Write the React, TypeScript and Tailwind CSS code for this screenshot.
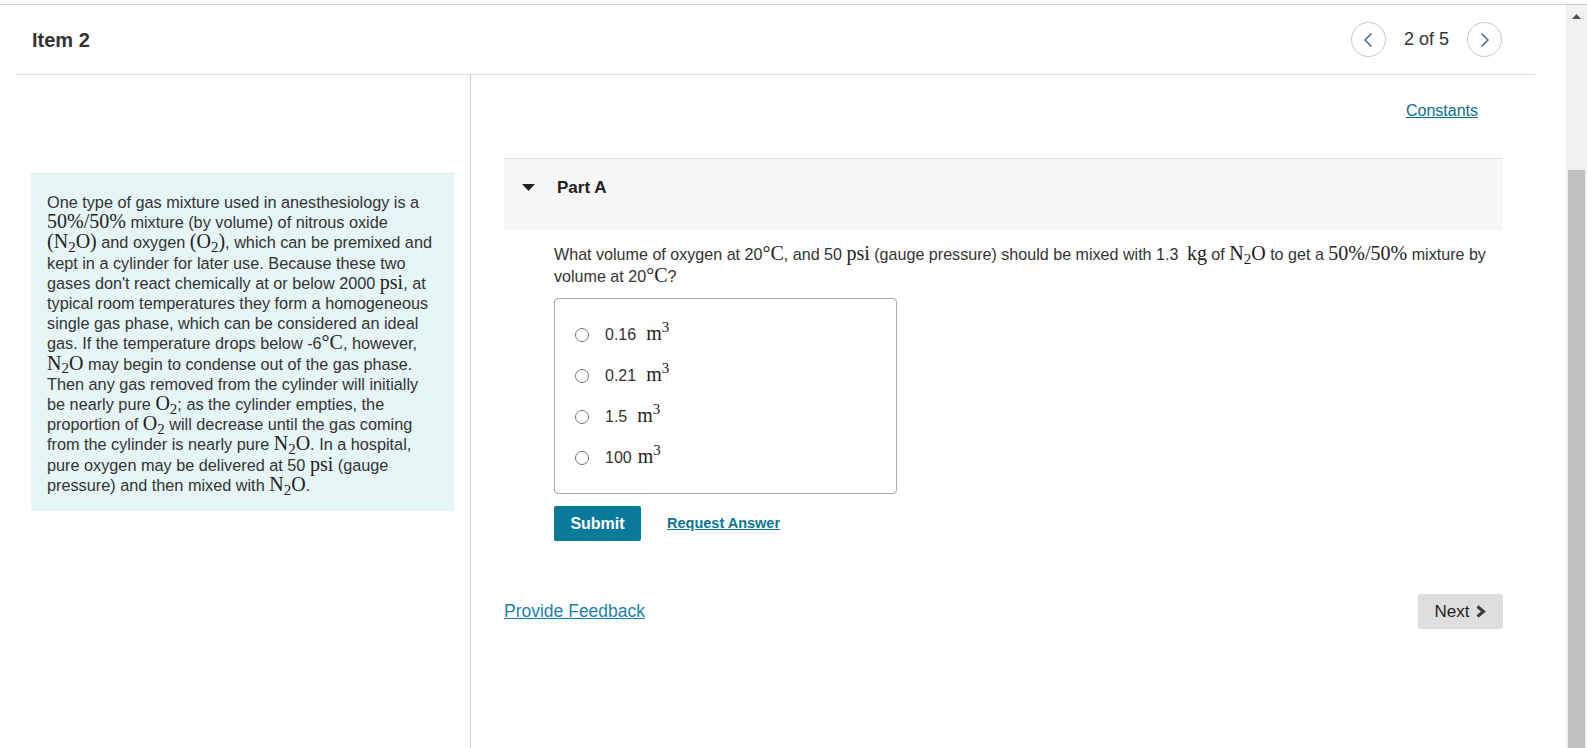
import type { ReactNode } from "react"

// serif stand-in for the rendered math
function M({ children, className = "" }: { children: ReactNode; className?: string }) {
  return <span className={`font-['Liberation_Serif',serif] text-[20px] leading-[12px] text-[#222] ${className}`}>{children}</span>
}

function N2O() {
  return (
    <M>
      N<sub>2</sub>O
    </M>
  )
}

function O2() {
  return (
    <M>
      O<sub>2</sub>
    </M>
  )
}

function Pct() {
  return <M>50%/50%</M>
}

const OPTIONS = [
  { value: "0.16", gap: "ml-[10px]" },
  { value: "0.21", gap: "ml-[10px]" },
  { value: "1.5", gap: "ml-[10px]" },
  { value: "100", gap: "ml-[6px]" },
]

function NavChevron({ dir }: { dir: "left" | "right" }) {
  return (
    <svg width="10" height="14" viewBox="0 0 10 14" fill="none">
      <path
        d={dir === "left" ? "M8 1 L2 7 L8 13" : "M2 1 L8 7 L2 13"}
        stroke="#476d8c"
        strokeWidth="1.6"
        strokeLinecap="round"
        strokeLinejoin="round"
      />
    </svg>
  )
}

export default function App() {
  return (
    <div className="h-[748px] w-full flex flex-col bg-white overflow-hidden font-['Liberation_Sans',Arial,sans-serif] text-[#333]">
      <div className="h-[5px] shrink-0 border-b border-[#cfcfcf]" />

      <div className="flex flex-1 min-h-0">
        <div className="flex-1 min-w-0">
          <div className="ml-[15px] w-[1520px] h-full flex flex-col">
            {/* header */}
            <div className="h-[70px] shrink-0 flex items-center justify-between border-b border-[#ddd] pl-[17px] pr-[33px]">
              <h2 className="text-[20px] font-bold text-[#333]">Item 2</h2>
              <div className="flex items-center gap-[18px]">
                <button className="w-[35px] h-[35px] rounded-full border border-[#c8c8c8] bg-white flex items-center justify-center">
                  <NavChevron dir="left" />
                </button>
                <span className="text-[18px] text-[#333]">2 of 5</span>
                <button className="w-[35px] h-[35px] rounded-full border border-[#c8c8c8] bg-white flex items-center justify-center">
                  <NavChevron dir="right" />
                </button>
              </div>
            </div>

            <div className="flex flex-1 min-h-0">
              {/* intro */}
              <div className="w-[456px] shrink-0 border-r border-[#c5d3df] px-4">
                <div className="mt-[98px] bg-[#e6f5f6] border-t border-[#dbe3e4] pt-[18px] pb-4 px-4 text-[16.25px] leading-[20.2px] text-[#333]">
                  One type of gas mixture used in anesthesiology is a<br />
                  <Pct /> mixture (by volume) of nitrous oxide<br />
                  <M>(</M><N2O /><M>)</M> and oxygen <M>(</M><O2 /><M>)</M>, which can be premixed and<br />
                  kept in a cylinder for later use. Because these two<br />
                  gases don't react chemically at or below 2000 <M>psi</M>, at<br />
                  typical room temperatures they form a homogeneous<br />
                  single gas phase, which can be considered an ideal<br />
                  gas. If the temperature drops below -6<M>°C</M>, however,<br />
                  <N2O /> may begin to condense out of the gas phase.<br />
                  Then any gas removed from the cylinder will initially<br />
                  be nearly pure <O2 />; as the cylinder empties, the<br />
                  proportion of <O2 /> will decrease until the gas coming<br />
                  from the cylinder is nearly pure <N2O />. In a hospital,<br />
                  pure oxygen may be delivered at 50 <M>psi</M> (gauge<br />
                  pressure) and then mixed with <N2O />.
                </div>
              </div>

              {/* part area */}
              <div className="flex-1 min-w-0 pl-[33px] pr-[32px]">
                <div className="pt-[26px] pr-[25px] text-right leading-5">
                  <a className="text-[16px] text-[#0a6d8f] underline">Constants</a>
                </div>

                <div className="mt-[37px] h-[72px] border-t border-[#ddd] bg-[#f7f7f7] pt-[19px] pl-[18px] flex items-start">
                  <svg width="13" height="7" viewBox="0 0 13 7" className="mt-[6px]">
                    <path d="M0 0 L13 0 L6.5 7 Z" fill="#222" />
                  </svg>
                  <span className="ml-[22px] text-[17px] font-bold leading-5 text-[#222]">Part A</span>
                </div>

                <div className="pl-[50px]">
                  <p className="mt-[13px] text-[16.1px] leading-[22px] text-[#333]">
                    What volume of oxygen at 20<M>°C</M>, and 50 <M>psi</M> (gauge pressure) should be mixed with 1.3 <M className="ml-[4px]">kg</M> of <N2O /> to get a <Pct /> mixture by volume at 20<M>°C</M>?
                  </p>

                  <div className="mt-[11px] w-[343px] border border-[#a8a8a8] rounded-[4px] py-[15px] pl-[20px]">
                    {OPTIONS.map((o) => (
                      <label key={o.value} className="h-[41px] flex items-center">
                        <span className="w-[14px] h-[14px] rounded-full border border-[#767676] bg-white shrink-0" />
                        <span className="ml-4 text-[16px] text-[#333]">
                          {o.value}
                          <M className={o.gap}>
                            m<sup>3</sup>
                          </M>
                        </span>
                      </label>
                    ))}
                  </div>

                  <div className="mt-3 flex items-center">
                    <button className="w-[87px] h-[35px] bg-[#0a7a9b] text-white text-[16px] font-bold rounded-[2px]">Submit</button>
                    <a className="ml-[26px] text-[14.5px] font-bold text-[#0b7597] underline">Request Answer</a>
                  </div>
                </div>

                <div className="mt-[53px] flex items-center justify-between">
                  <a className="text-[17.5px] text-[#1b7fae] underline">Provide Feedback</a>
                  <button className="w-[85px] h-[35px] bg-[#dedede] rounded-[3px] flex items-center justify-center gap-[6px] text-[17px] text-[#222]">
                    Next
                    <svg width="11" height="13" viewBox="0 0 11 13" fill="none">
                      <path d="M2.5 1.5 L8.5 6.5 L2.5 11.5" stroke="#3a3a3a" strokeWidth="3" />
                    </svg>
                  </button>
                </div>
              </div>
            </div>
          </div>
        </div>

        {/* scrollbar */}
        <div className="w-[21px] shrink-0 bg-[#f1f1f1] flex flex-col items-center">
          <svg width="9" height="5" viewBox="0 0 9 5" className="mt-[9px]">
            <path d="M0 5 L4.5 0 L9 5 Z" fill="#505050" />
          </svg>
          <div className="mt-[151px] w-[17px] flex-1 bg-[#c1c1c1]" />
        </div>
      </div>
    </div>
  )
}
